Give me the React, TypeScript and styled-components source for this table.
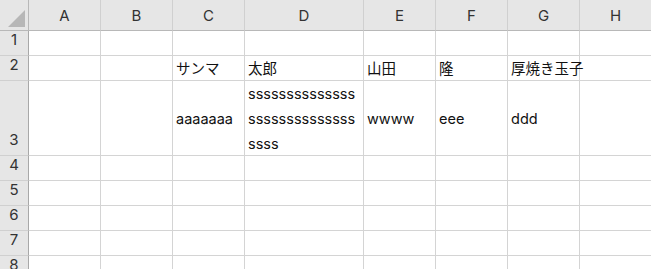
import React from "react";
import styled, { createGlobalStyle } from "styled-components";

const GlobalStyle = createGlobalStyle`
  html, body {
    margin: 0;
    padding: 0;
    background: #ffffff;
    overflow: hidden;
  }
  * { box-sizing: border-box; }
`;

const COLUMNS = ["A", "B", "C", "D", "E", "F", "G", "H"];
const COLUMN_WIDTHS = [72, 72, 72, 119, 72, 72, 72, 72];
const ROW_HEIGHTS = [25, 25, 75, 25, 25, 25, 25, 25];

const CELLS: Record<string, string> = {
  C2: "サンマ",
  D2: "太郎",
  E2: "山田",
  F2: "隆",
  G2: "厚焼き玉子",
  C3: "aaaaaaa",
  D3: "ssssssssssssssssssssssssssssssss",
  E3: "wwww",
  F3: "eee",
  G3: "ddd",
};

const Sheet = styled.div<{ $cols: string; $rows: string }>`
  display: grid;
  grid-template-columns: ${(p) => p.$cols};
  grid-template-rows: ${(p) => p.$rows};
  font-family: "Inter", "Noto Sans CJK JP", sans-serif;
  font-size: 14.5px;
  color: #111;
  background: #fff;
`;

const Corner = styled.div`
  position: relative;
  background: #e6e6e6;
  border-right: 1px solid #b8b8b8;
  border-bottom: 1px solid #b8b8b8;

  &::after {
    content: "";
    position: absolute;
    right: 3px;
    bottom: 3px;
    width: 0;
    height: 0;
    border-left: 17px solid transparent;
    border-bottom: 17px solid #b7b7b7;
  }
`;

const ColumnHeader = styled.div`
  display: flex;
  align-items: flex-end;
  justify-content: center;
  padding-bottom: 5px;
  background: #e6e6e6;
  color: #333;
  font-size: 15px;
  border-right: 1px solid #d0d0d0;
  border-bottom: 1px solid #b8b8b8;
`;

const RowHeader = styled.div`
  display: flex;
  align-items: flex-end;
  justify-content: center;
  padding-bottom: 6px;
  background: #e6e6e6;
  color: #333;
  font-size: 15px;
  border-right: 1px solid #a8a8a8;
  border-bottom: 1px solid #d0d0d0;
`;

const Cell = styled.div<{ $wrap?: boolean }>`
  display: flex;
  align-items: center;
  padding: 0 3px 0 3px;
  border-right: 1px solid #d4d4d4;
  border-bottom: 1px solid #d4d4d4;
  white-space: ${(p) => (p.$wrap ? "normal" : "nowrap")};
  word-break: ${(p) => (p.$wrap ? "break-all" : "normal")};
  line-height: 25px;
  overflow: visible;
  min-width: 0;
`;

const CellText = styled.span`
  display: block;
`;

export default function App() {
  const cols = `29px ${COLUMN_WIDTHS.map((w) => `${w}px`).join(" ")}`;
  const rows = `31px ${ROW_HEIGHTS.map((h) => `${h}px`).join(" ")}`;

  return (
    <>
      <GlobalStyle />
      <Sheet $cols={cols} $rows={rows}>
        <Corner />
        {COLUMNS.map((c) => (
          <ColumnHeader key={c}>{c}</ColumnHeader>
        ))}
        {ROW_HEIGHTS.map((_, i) => {
          const row = i + 1;
          return (
            <React.Fragment key={row}>
              <RowHeader>{row}</RowHeader>
              {COLUMNS.map((c) => {
                const value = CELLS[`${c}${row}`];
                return (
                  <Cell key={c} $wrap={c === "D"}>
                    {value && <CellText>{value}</CellText>}
                  </Cell>
                );
              })}
            </React.Fragment>
          );
        })}
      </Sheet>
    </>
  );
}
